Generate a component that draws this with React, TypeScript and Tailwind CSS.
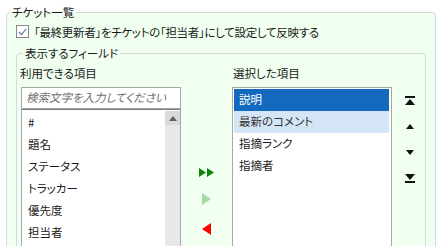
import type { ReactNode } from 'react'

const available = ['#', '題名', 'ステータス', 'トラッカー', '優先度', '担当者']
const selected = ['説明', '最新のコメント', '指摘ランク', '指摘者']

function Tri({ dir, color, w = 9, h = 12 }: { dir: 'l' | 'r' | 'u' | 'd'; color: string; w?: number; h?: number }) {
  const pts =
    dir === 'r'
      ? `0,0 ${w},${h / 2} 0,${h}`
      : dir === 'l'
        ? `${w},0 0,${h / 2} ${w},${h}`
        : dir === 'u'
          ? `0,${h} ${w / 2},0 ${w},${h}`
          : `0,0 ${w / 2},${h} ${w},0`
  return (
    <svg width={w} height={h} viewBox={`0 0 ${w} ${h}`} className="block">
      <polygon points={pts} fill={color} />
    </svg>
  )
}

function IconBtn({ children, className }: { children: ReactNode; className?: string }) {
  return <div className={`flex h-[22px] items-center justify-center ${className ?? ''}`}>{children}</div>
}

export default function App() {
  return (
    <div className="h-[246px] w-[440px] overflow-hidden bg-white pl-[6px] pt-[3px] font-['Noto_Sans_CJK_JP',sans-serif] text-[11.5px] text-[#1a1a1a] [font-feature-settings:'palt']">
      <fieldset className="h-[260px] w-[430px] rounded-[4px] border border-[#d3dce3] bg-[#f0fff0] px-[9px]">
        <legend className="-ml-[6px] px-[2px] leading-[18px]">チケット一覧</legend>
        <div className="mt-[4px] flex h-[13px] items-center gap-[5px]">
          <div className="flex h-[13px] w-[13px] items-center justify-center border border-[#8a8a8a] bg-white">
            <svg width="9" height="8" viewBox="0 0 9 8">
              <path d="M0.8 4 L3.4 6.6 L8.2 0.8" fill="none" stroke="#5d7a98" strokeWidth="1.1" />
            </svg>
          </div>
          <span className="leading-[18px] tracking-[-0.3px]">「最終更新者」をチケットの「担当者」にして設定して反映する</span>
        </div>
        <fieldset className="mt-[6px] h-[220px] w-[410px] rounded-[4px] border border-[#d3dce3] pl-[4px]">
          <legend className="ml-[2px] px-[2px] leading-[18px]">表示するフィールド</legend>
          <div className="mt-[2px] flex">
            <div className="w-[160px]">
              <div className="-ml-px leading-[18px]">利用できる項目</div>
              <div className="mt-[5px] flex h-[22px] items-center border border-[#a8a8a8] bg-white pl-[4px] italic text-[#707070]">
                検索文字を入力してください
              </div>
              <div className="flex h-[150px] border border-t-[#7c7c7c] border-[#a8a8a8] bg-white">
                <div className="flex-1 pt-[2px]">
                  {available.map((item) => (
                    <div key={item} className="flex h-[22px] items-center pl-[6px]">
                      {item}
                    </div>
                  ))}
                </div>
                <div className="mt-[1px] w-[15px] bg-[#e8e8e8]">
                  <div className="flex h-[14px] items-center justify-center bg-[#dadada]">
                    <Tri dir="u" color="#5f5f5f" w={8} h={5} />
                  </div>
                </div>
              </div>
            </div>
            <div className="flex w-[51px] flex-col items-center pt-[97px]">
              <IconBtn className="-ml-[1px] gap-[1px]">
                <Tri dir="r" color="#0b870b" w={7} h={9} />
                <Tri dir="r" color="#0b870b" w={7} h={9} />
              </IconBtn>
              <IconBtn className="mt-[5px]">
                <Tri dir="r" color="#a6dba6" />
              </IconBtn>
              <IconBtn className="mt-[8px]">
                <Tri dir="l" color="#ff0000" />
              </IconBtn>
            </div>
            <div className="w-[160px]">
              <div className="pl-[1px] leading-[18px]">選択した項目</div>
              <div className="mt-[5px] h-[172px] border border-[#a8a8a8] bg-white py-[1px] pl-px pr-[2px]">
                {selected.map((item, i) => (
                  <div
                    key={item}
                    className={`flex h-[22px] items-center pl-[5px] ${
                      i === 0 ? 'bg-[#1269bd] text-white' : i === 1 ? 'bg-[#d4e5f5] text-[#333]' : ''
                    }`}
                  >
                    {item}
                  </div>
                ))}
              </div>
            </div>
            <div className="flex w-[33px] flex-col items-center pl-[3px] pt-[23px]">
              <IconBtn className="h-[26px]">
                <div className="flex flex-col items-center gap-[1px]">
                  <div className="h-[2px] w-[10px] bg-[#111]" />
                  <Tri dir="u" color="#111" w={10} h={6} />
                </div>
              </IconBtn>
              <IconBtn className="h-[26px]">
                <Tri dir="u" color="#111" w={8} h={5} />
              </IconBtn>
              <IconBtn className="h-[26px]">
                <Tri dir="d" color="#111" w={8} h={5} />
              </IconBtn>
              <IconBtn className="h-[26px]">
                <div className="flex flex-col items-center gap-[1px]">
                  <Tri dir="d" color="#111" w={10} h={6} />
                  <div className="h-[2px] w-[10px] bg-[#111]" />
                </div>
              </IconBtn>
            </div>
          </div>
        </fieldset>
      </fieldset>
    </div>
  )
}
